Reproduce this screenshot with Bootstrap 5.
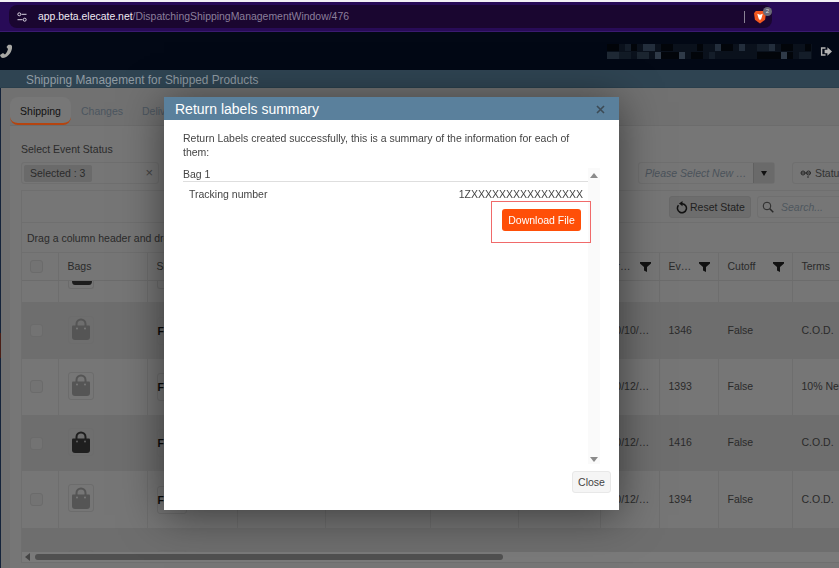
<!DOCTYPE html>
<html lang="en">
<head>
<meta charset="utf-8">
<title>Return labels summary</title>
<link href="https://cdn.jsdelivr.net/npm/bootstrap@5.3.0/dist/css/bootstrap.min.css" rel="stylesheet">
<style>
html,body{height:568px;overflow:hidden}
body{font-family:"Liberation Sans",Arial,sans-serif;font-size:11px;color:#2a2a2a;background:#757575;width:839px;position:relative}
.chrome-top{height:32px;background:#280b57;border-top:2px solid #f2f0f4;border-bottom:1px solid #3a1a70;padding:3px 67px 2px 9px}
.url-box{height:23px;background:#1a0630;border-radius:8px;padding:0 12px 0 8px;font-size:10.45px;color:#8b7f9b}
.url-text{margin-left:3px}
.url-host{color:#eee9f2}
.url-sep{width:1px;height:12px;background:#8a8294;margin-right:9px}
.brave-wrap{width:18px;height:20px;position:relative;margin-right:-12px}
.brave-count{position:absolute;left:9px;top:0;width:9px;height:9px;border-radius:50%;background:#6a6a78;color:#ddd;font-size:6px;line-height:9px;text-align:center}
.brave-mark{position:absolute;left:0;top:3px}
.app-nav{height:38px;background:#020815;padding:0 7px 0 0}
.page-title{height:18px;background:#2f4452;color:#8f9ba3;font-size:11.85px;line-height:20px;padding-left:26px;border-bottom:1px solid #2a3f4c}
.page-wrap{position:relative;height:480px;padding-left:10px;background:#717171}
.edge-strip{position:absolute;left:0;top:0;width:1px;height:480px;background:#14233a}
.edge-red{position:absolute;left:0;top:245px;width:1px;height:25px;background:#4a1e16}
.pane{background:#767676;height:480px}
.tab-row{height:28px;padding-top:9px;box-sizing:content-box;border-bottom:1px solid #6c6c6c;font-size:10.5px;color:#4c5660;background:#717171}
.tab-on{width:61px;height:28px;background:#777;color:#111;border-radius:8px;border-bottom:2px solid #b5440f;text-align:center;line-height:28px}
.tab-off{line-height:29px;margin-left:10px;width:51px}
.filter-label{padding:17px 0 0 11px;line-height:13px;color:#2b2b2b;font-size:10.5px;box-sizing:content-box}
.filter-row{height:22px;margin-top:6px;position:relative}
.select-box{margin-left:11px;width:138px;height:22px;border:1px solid #6f6f6f;border-radius:3px;padding:2px 5px 2px 2px;font-size:10.5px;color:#2b2b2b}
.sel-tag{width:68px;height:17px;background:#6a6a6a;border-radius:2px;line-height:17px;padding-left:6px}
.sel-x{color:#444;font-size:13px}
.new-box{position:absolute;left:628px;top:0;width:137px;height:22px;border:1px solid #6f6f6f;border-radius:3px;font-style:italic;color:#4a525a;font-size:10.5px;padding-left:6px;line-height:20px;white-space:nowrap}
.new-caret{position:absolute;right:0;top:0;width:21px;height:20px;background:#6a6a6a;border-left:1px solid #606060}
.new-caret i{position:absolute;left:7px;top:8px;border:3.500px solid transparent;border-top:5px solid #111;border-bottom:0}
.status-btn{position:absolute;left:782px;top:0;width:70px;height:22px;border:1px solid #6f6f6f;border-radius:3px;color:#333;font-size:10.5px;line-height:20px;padding-left:7px;white-space:nowrap}
.grid-shell{margin:6px 0 0 11px;border:1px solid #6f6f6f;border-right:0;height:373px;overflow:hidden;position:relative}
.tool-row{height:32px;border-bottom:1px solid #6f6f6f;position:relative}
.reset-btn{position:absolute;left:647px;top:5px;width:82px;height:22px;background:#6d6d6d;border:1px solid #696969;border-radius:3px;font-size:10.5px;color:#1f1f1f;line-height:20px;padding-left:20px}
.reset-btn svg{position:absolute;left:6px;top:4px}
.search-box{position:absolute;left:735px;top:5px;width:100px;height:22px;border:1px solid #6f6f6f;border-radius:3px;font-style:italic;color:#4e565e;font-size:10.5px;line-height:20px;padding-left:23px}
.search-box svg{position:absolute;left:3px;top:3px}
.drag-row{height:30px;line-height:30px;padding-left:5px;font-size:10.5px;color:#2a2a2a;border-bottom:1px solid #6f6f6f}
.grid-tbl{table-layout:fixed;width:830px;border-collapse:collapse;font-size:10.5px;color:#2a2a2a}
.grid-tbl td,.grid-tbl th{border-right:1px solid #6e6e6e;padding:0 0 0 9px;font-weight:400;white-space:nowrap;overflow:hidden;position:relative}
.grid-head th{height:27px;border-bottom:1px solid #6c6c6c;padding-top:1px}
.grid-tbl tr.h-cut td{height:22.5px;border-bottom:1px solid #6e6e6e;vertical-align:top}
.grid-tbl tr.h-full td{height:56.3px}
.grid-tbl tr.h-last td{height:40px;vertical-align:top;padding-top:22px}
.tint{background:#6e6e6e}
.c1{width:36px}.c2{width:89px}.c3{width:90px}.c4{width:88px}.c5{width:105px}.c6{width:88px}.c7{width:82px}.c8{width:59px}.c9{width:59px}.c10{width:74px}.c11{width:60px}
.chk{display:block;width:13px;height:13px;border:1px solid #6b6b6b;border-radius:3px;background:#737373;margin-left:-1px}
.bag-tile{display:inline-flex;align-items:center;justify-content:center;width:26px;height:28px;border:1px solid #6c6c6c;border-radius:3px}
.tile-cut{display:block;width:26px;height:8px;border:1px solid #6b6b6b;border-top:0;border-radius:0 0 3px 3px}
.tile-cut svg{display:block;margin-left:3px}
.box-cut{display:block;width:30px;height:8px;border:1px solid #6b6b6b;border-top:0;border-radius:0 0 3px 3px}
.carrier{display:inline-block;width:30px;height:28px;border:1px solid #6c6c6c;border-radius:3px;font-weight:700;font-size:10.5px;line-height:26px;color:#0a0a0a}
.fn{position:absolute;right:8px;top:9px}
.h-scroll{position:absolute;left:0;right:0;bottom:0;height:10px;background:#7a7a7a}
.h-thumb{position:absolute;left:13px;top:2px;width:468px;height:6px;background:#505050;border-radius:3px}
.h-arrow{position:absolute;left:3px;top:1px;border:4px solid transparent;border-right:5px solid #444;border-left:0}
.sheet{width:455px;margin:97px 0 0 164px;max-width:none}
.sheet .modal-content{border:0;border-radius:0;height:413px;box-shadow:0 5px 40px rgba(0,0,0,.5);color:#444;font-size:10.5px}
.sheet-head{height:23px;background:#5a809c;color:#fff;font-size:14px;line-height:22px;padding:0 14px 0 11px}
.sheet-x{background:none;border:0;padding:0;line-height:1}
.sheet-main{padding:12px 19px 0 19px;position:relative;flex:1 1 auto}
.intro{line-height:13.500px;margin:0 0 9px;width:400px}
.scroller{position:relative;height:296px;width:417px;background:linear-gradient(to right,transparent 405px,#fafafa 405px)}
.bag-title{height:13px;line-height:13px;border-bottom:1px solid #dedede;width:405px;box-sizing:content-box}
.track-row{padding:5px 5px 0 6px;line-height:14px;width:405px}
.dl-zone{width:100px;height:42px;border:1px solid #f06a6a;margin:0 0 0 308px;padding:7px 0 0 10px}
.dl-btn{width:79px;height:22px;background:#ff4f08;border:0;border-radius:3px;color:#fff;font-size:10.5px;padding:0;line-height:21px}
.tri-up{position:absolute;left:407px;top:5px;border:4px solid transparent;border-bottom:5px solid #8a8a8a;border-top:0}
.tri-dn{position:absolute;left:407px;top:289px;border:4px solid transparent;border-top:5px solid #8a8a8a;border-bottom:0}
.sheet-foot{padding:0 8px 17px 0;height:39px}
.close-btn{width:39px;height:22px;background:#f5f5f5;border:1px solid #e8e8e8;border-radius:3px;color:#444;font-size:10.5px;padding:0;line-height:20px}
</style>
</head>
<body>
<div class="chrome-top">
  <div class="url-box d-flex align-items-center">
    <svg width="10" height="10" viewBox="0 0 10 10" class="me-2 flex-shrink-0" fill="none" stroke="#d8d2e0" stroke-width="1"><circle cx="2.300" cy="2.300" r="1.500"/><path d="M4.500 2.300h5M.5 7.700h5"/><circle cx="7.700" cy="7.700" r="1.500"/></svg>
    <span class="url-text"><span class="url-host">app.beta.elecate.net</span>/DispatchingShippingManagementWindow/476</span>
    <span class="ms-auto url-sep"></span>
    <span class="brave-wrap">
      <svg class="brave-mark" width="12" height="14" viewBox="0 0 13 15"><path d="M2 1h9l2 2.500-1 7-5.500 4-5.500-4-1-7z" fill="#f2571f"/><path d="M3.500 4l3 1 3-1-1.500 5-1.500 2-1.500-2z" fill="#fff"/></svg>
      <span class="brave-count">2</span>
    </span>
  </div>
</div>
<nav class="app-nav d-flex align-items-center justify-content-between">
  <svg width="13" height="15" viewBox="0 0 13 15" fill="#a8a8a4"><path d="M8 1c1.500-.6 3.500-.4 4 1 .6 5-3 11-9 12-1.500 0-2.500-1-3-3l3-2 2 1.500c1.500-1.500 2.500-3.500 3-5.500L6.500 3z"/></svg>
  <div class="d-flex align-items-center">
    <svg width="205" height="15" viewBox="0 0 205 15" class="me-2" shape-rendering="crispEdges">
      <rect x="0" y="0" width="205" height="15" fill="#0a111c"/>
      <g fill="#0b1522"><rect x="0" y="0" width="12" height="7" fill="#02050a"/><rect x="18" y="0" width="6" height="7" fill="#141d29"/><rect x="24" y="0" width="6" height="7" fill="#02050a"/><rect x="36" y="0" width="12" height="7" fill="#232e3c"/><rect x="54" y="0" width="12" height="7" fill="#02050a"/><rect x="90" y="0" width="6" height="7" fill="#02050a"/><rect x="108" y="0" width="6" height="7" fill="#232e3c"/><rect x="114" y="0" width="12" height="7" fill="#02050a"/><rect x="132" y="0" width="6" height="7" fill="#232e3c"/><rect x="150" y="0" width="12" height="7" fill="#141d29"/><rect x="162" y="0" width="6" height="7" fill="#232e3c"/><rect x="174" y="0" width="12" height="7" fill="#02050a"/><rect x="198" y="0" width="6" height="7" fill="#02050a"/>
      <rect x="0" y="8" width="12" height="7" fill="#1f2935"/><rect x="12" y="8" width="12" height="7" fill="#121b26"/><rect x="30" y="8" width="12" height="7" fill="#1b2530"/><rect x="48" y="8" width="6" height="7" fill="#2f3a48"/><rect x="54" y="8" width="18" height="7" fill="#02050a"/><rect x="72" y="8" width="6" height="7" fill="#2f3a48"/><rect x="84" y="8" width="12" height="7" fill="#02050a"/><rect x="102" y="8" width="6" height="7" fill="#141d29"/><rect x="150" y="8" width="24" height="7" fill="#02050a"/><rect x="174" y="8" width="6" height="7" fill="#2f3a48"/><rect x="180" y="8" width="6" height="7" fill="#02050a"/><rect x="192" y="8" width="12" height="7" fill="#141d29"/></g>
    </svg>
    <svg width="12" height="11" viewBox="0 0 13 11" fill="#b4b4b4"><path d="M1 1h5v1.500H2.500v6H6V10H1z"/><path d="M5 3.500h3V1l5 4.500L8 10V7.500H5z"/></svg>
  </div>
</nav>
<div class="page-title">Shipping Management for Shipped Products</div>
<div class="page-wrap">
  <div class="edge-strip"></div><div class="edge-red"></div>
  <div class="pane">
  <div class="tab-row d-flex">
    <div class="tab-on">Shipping</div>
    <div class="tab-off">Changes</div>
    <div class="tab-off">Delivery</div>
  </div>
  <div class="filter-label">Select Event Status</div>
  <div class="filter-row">
    <div class="select-box d-flex align-items-center justify-content-between">
      <span class="sel-tag">Selected : 3</span><span class="sel-x">×</span>
    </div>
    <div class="new-box">Please Select New …<span class="new-caret"><i></i></span></div>
    <div class="status-btn">
      <svg width="12" height="10" viewBox="0 0 12 10" fill="none" stroke="#2a2a2a" stroke-width="1"><circle cx="3" cy="4" r="2"/><circle cx="8.500" cy="4" r="2"/><path d="M1 4h10M8 7v2"/></svg> Status
    </div>
  </div>
  <div class="grid-shell">
    <div class="tool-row">
      <div class="reset-btn"><svg width="12" height="13" viewBox="0 0 12 13" fill="none" stroke="#111" stroke-width="1.500"><path d="M6 2.700A4.500 4.500 0 1 1 2.500 4.300"/><path d="M6.500 0v5.200L3 2.600z" fill="#111" stroke="none"/></svg>Reset State</div>
      <div class="search-box"><svg width="14" height="14" viewBox="0 0 14 14" fill="none" stroke="#2a2a2a" stroke-width="1"><circle cx="6" cy="6" r="3.800"/><path d="M8.800 8.800l3.500 3.500" stroke-width="1.500"/></svg>Search...</div>
    </div>
    <div class="drag-row">Drag a column header and drop it here to group by that column</div>
    <table class="grid-tbl">
      <colgroup><col class="c1"><col class="c2"><col class="c3"><col class="c4"><col class="c5"><col class="c6"><col class="c7"><col class="c8"><col class="c9"><col class="c10"><col class="c11"></colgroup>
      <tr class="grid-head"><th><span class="chk"></span></th><th>Bags</th><th>Ship</th><th></th><th></th><th></th><th></th>
        <th>Pr…<svg class="fn" width="11" height="10" viewBox="0 0 11 10" fill="#111"><path d="M0 0h11v1.500L7 5v5L4 8.500V5L0 1.500z"/></svg></th>
        <th>Ev…<svg class="fn" width="11" height="10" viewBox="0 0 11 10" fill="#111"><path d="M0 0h11v1.500L7 5v5L4 8.500V5L0 1.500z"/></svg></th>
        <th>Cutoff<svg class="fn" width="11" height="10" viewBox="0 0 11 10" fill="#111"><path d="M0 0h11v1.500L7 5v5L4 8.500V5L0 1.500z"/></svg></th>
        <th>Terms</th></tr>
      <tr class="h-cut"><td></td><td><span class="tile-cut"><svg width="20" height="5" viewBox="0 0 20 5" fill="#1c1c1c"><path d="M0 0h20q0 4-3 4H3Q0 4 0 0z"/></svg></span></td><td><span class="box-cut"></span></td><td></td><td></td><td></td><td></td><td></td><td></td><td></td><td></td></tr>
      <tr class="h-full tint"><td><span class="chk"></span></td><td><span class="bag-tile"><svg width="20" height="23" viewBox="0 0 20 23"><path d="M5.500 10V6a4.500 4.500 0 0 1 9 0v4" fill="none" stroke="#555" stroke-width="2"/><path d="M2 7.500h16q1 0 1 1V19q0 3-3 3H4q-3 0-3-3V8.500q0-1 1-1z" fill="#555"/><circle cx="6" cy="10.500" r=".9" fill="#7c7c7c"/><circle cx="14" cy="10.500" r=".9" fill="#7c7c7c"/></svg></span></td><td><span class="carrier">Fe</span></td><td></td><td></td><td></td><td></td><td>10/10/…</td><td>1346</td><td>False</td><td>C.O.D.</td></tr>
      <tr class="h-full"><td><span class="chk"></span></td><td><span class="bag-tile"><svg width="20" height="23" viewBox="0 0 20 23"><path d="M5.500 10V6a4.500 4.500 0 0 1 9 0v4" fill="none" stroke="#555" stroke-width="2"/><path d="M2 7.500h16q1 0 1 1V19q0 3-3 3H4q-3 0-3-3V8.500q0-1 1-1z" fill="#555"/><circle cx="6" cy="10.500" r=".9" fill="#7c7c7c"/><circle cx="14" cy="10.500" r=".9" fill="#7c7c7c"/></svg></span></td><td><span class="carrier">Fe</span></td><td></td><td></td><td></td><td></td><td>10/12/…</td><td>1393</td><td>False</td><td>10% Net</td></tr>
      <tr class="h-full tint"><td><span class="chk"></span></td><td><span class="bag-tile"><svg width="20" height="23" viewBox="0 0 20 23"><path d="M5.500 10V6a4.500 4.500 0 0 1 9 0v4" fill="none" stroke="#1f1f1f" stroke-width="2"/><path d="M2 7.500h16q1 0 1 1V19q0 3-3 3H4q-3 0-3-3V8.500q0-1 1-1z" fill="#1f1f1f"/><circle cx="6" cy="10.500" r=".9" fill="#666"/><circle cx="14" cy="10.500" r=".9" fill="#666"/></svg></span></td><td><span class="carrier">Fe</span></td><td></td><td></td><td></td><td></td><td>10/12/…</td><td>1416</td><td>False</td><td>C.O.D.</td></tr>
      <tr class="h-full"><td><span class="chk"></span></td><td><span class="bag-tile"><svg width="20" height="23" viewBox="0 0 20 23"><path d="M5.500 10V6a4.500 4.500 0 0 1 9 0v4" fill="none" stroke="#555" stroke-width="2"/><path d="M2 7.500h16q1 0 1 1V19q0 3-3 3H4q-3 0-3-3V8.500q0-1 1-1z" fill="#555"/><circle cx="6" cy="10.500" r=".9" fill="#7c7c7c"/><circle cx="14" cy="10.500" r=".9" fill="#7c7c7c"/></svg></span></td><td><span class="carrier">Fe</span></td><td></td><td></td><td></td><td></td><td>10/12/…</td><td>1394</td><td>False</td><td>C.O.D.</td></tr>
      <tr class="h-last tint"><td></td><td><span class="bag-tile"><svg width="20" height="23" viewBox="0 0 20 23"><path d="M5.500 10V6a4.500 4.500 0 0 1 9 0v4" fill="none" stroke="#1f1f1f" stroke-width="2"/></svg></span></td><td><span class="carrier"></span></td><td></td><td></td><td></td><td></td><td></td><td></td><td></td><td></td></tr>
    </table>
    <div class="h-scroll"><i class="h-arrow"></i><div class="h-thumb"></div></div>
  </div>
  </div>
</div>
<div class="modal d-block" role="dialog">
  <div class="modal-dialog sheet">
    <div class="modal-content">
      <div class="sheet-head d-flex justify-content-between align-items-center">
        <span>Return labels summary</span>
        <button class="sheet-x" type="button"><svg width="9" height="9" viewBox="0 0 9 9" stroke="#3c4a55" stroke-width="1.600"><path d="M1 1l7 7M8 1l-7 7"/></svg></button>
      </div>
      <div class="sheet-main">
        <p class="intro">Return Labels created successfully, this is a summary of the information for each of them:</p>
        <div class="scroller">
          <div class="bag-title">Bag 1</div>
          <div class="track-row d-flex justify-content-between"><span>Tracking number</span><span>1ZXXXXXXXXXXXXXXXX</span></div>
          <div class="dl-zone"><button class="dl-btn" type="button">Download File</button></div>
          <i class="tri-up"></i><i class="tri-dn"></i>
        </div>
      </div>
      <div class="sheet-foot d-flex justify-content-end"><button class="close-btn" type="button">Close</button></div>
    </div>
  </div>
</div>
<script src="https://cdn.jsdelivr.net/npm/bootstrap@5.3.0/dist/js/bootstrap.bundle.min.js"></script>
</body>
</html>
